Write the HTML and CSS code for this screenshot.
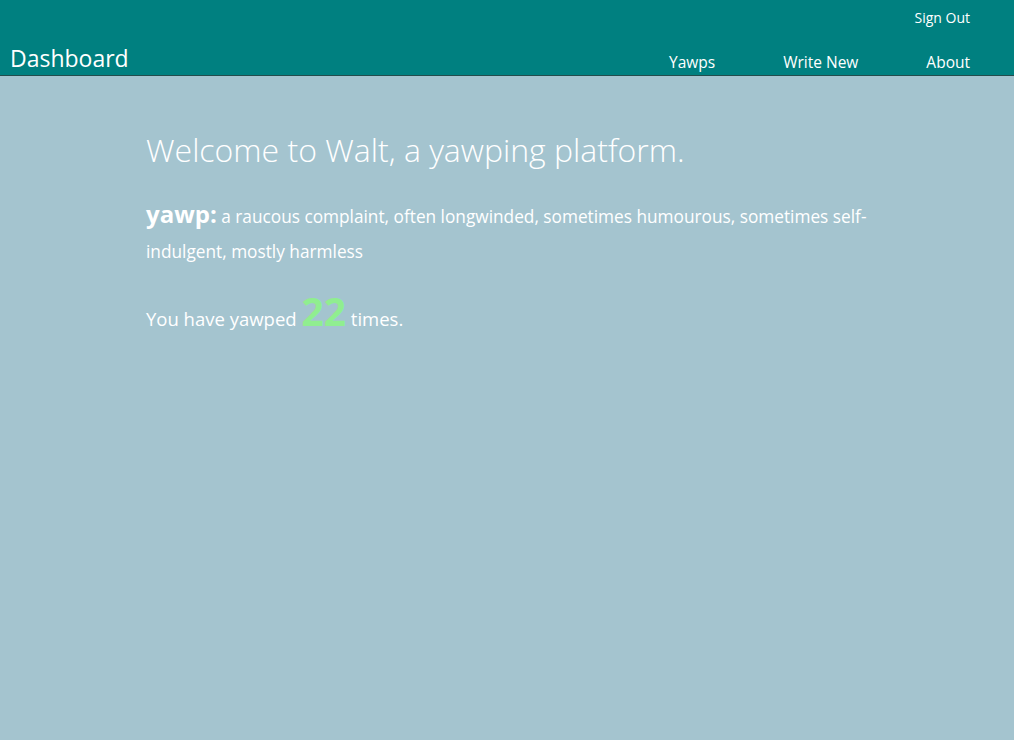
FILE: index.html
```html
<!DOCTYPE html>
<html>
<head>
<meta charset="utf-8">
<link rel="stylesheet" href="styles.css">
</head>
<body>
<header class="topbar">
  <div class="topbar-row top">
    <a class="signout" href="#">Sign Out</a>
  </div>
  <div class="topbar-row bottom">
    <div class="brand">Dashboard</div>
    <nav class="nav">
      <a href="#">Yawps</a>
      <a href="#">Write New</a>
      <a href="#">About</a>
    </nav>
  </div>
</header>
<main class="content">
  <h1 class="welcome">Welcome to Walt, a yawping platform.</h1>
  <p class="definition"><span class="term">yawp:</span> a raucous complaint, often longwinded, sometimes humourous, sometimes self-indulgent, mostly harmless</p>
  <p class="count">You have yawped <span class="num">22</span> times.</p>
</main>
</body>
</html>
```

FILE: styles.css
```css
html, body {
  margin: 0;
  padding: 0;
}
body {
  background: #a4c4cf;
  font-family: "Open Sans", "Noto Sans", sans-serif;
  color: #ffffff;
  min-height: 740px;
}
a {
  color: #ffffff;
  text-decoration: none;
}
.topbar {
  background: #008080;
  height: 75px;
  border-bottom: 1px solid #234d4d;
  display: flex;
  flex-direction: column;
}
.topbar-row.top {
  display: flex;
  justify-content: flex-end;
  padding: 7px 44px 0 0;
  height: 26px;
}
.signout {
  font-size: 14px;
  line-height: 22px;
}
.topbar-row.bottom {
  display: flex;
  justify-content: space-between;
  align-items: flex-end;
  flex: 1;
  padding: 0 44px 0 10px;
}
.brand {
  font-size: 23px;
  line-height: 30px;
  padding-bottom: 2px;
}
.nav {
  display: flex;
  gap: 68px;
  padding-bottom: 1px;
}
.nav a {
  font-size: 15.5px;
  line-height: 24px;
}
.content {
  max-width: 722px;
  margin: 0 auto;
  padding-top: 50px;
}
.welcome {
  font-weight: 300;
  font-size: 32px;
  line-height: 48px;
  margin: 0 0 25px;
}
.definition {
  font-size: 17.25px;
  line-height: 35px;
  margin: 0 0 22px;
}
.term {
  font-size: 24px;
  font-weight: 700;
  line-height: 24px;
}
.count {
  font-size: 18.5px;
  line-height: 40px;
  margin: 0;
}
.num {
  color: #90ee90;
  font-size: 39px;
  font-weight: 700;
}
```
